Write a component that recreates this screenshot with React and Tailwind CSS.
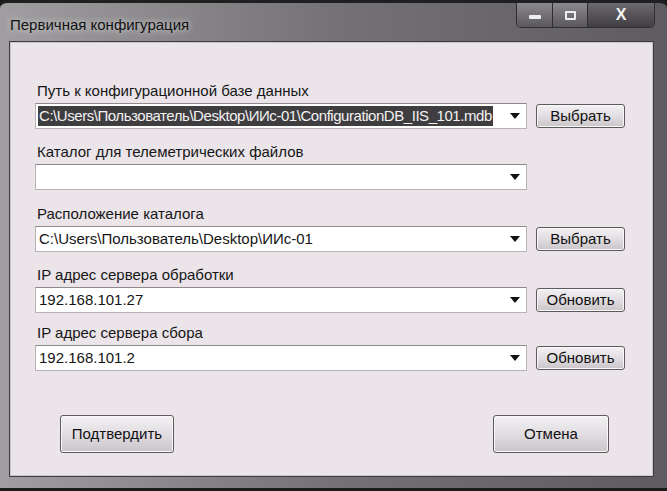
import React from 'react';

const font = { fontFamily: '"Liberation Sans", Arial, sans-serif' };

const Arrow = () => (
  <svg width="10" height="6" viewBox="0 0 10 6" className="shrink-0">
    <path d="M0 0 H10 L5 6 Z" fill="#111" />
  </svg>
);

const Combo = ({ value, selected }) => (
  <div className="w-[492px] h-[26px] bg-white border border-[#b8b2b8] border-t-[#8e8a8e] flex items-center pl-[2px] pr-[6px] gap-[8px]">
    <div className="flex-1 overflow-hidden flex justify-start min-w-0">
      {selected ? (
        <span className="bg-[#3f3d40] text-[#f2f2f2] whitespace-nowrap px-[1px] leading-[20px] text-[15px] tracking-[-0.45px]">{value}</span>
      ) : (
        <span className="whitespace-nowrap text-[15px] text-[#151515] pl-[1px]">{value}</span>
      )}
    </div>
    <Arrow />
  </div>
);

const Btn = ({ children, className = '' }) => (
  <div className={`rounded-[3px] border border-[#5d5a5e] bg-gradient-to-b from-[#f3f1f3] via-[#e1dde1] to-[#c9c5c9] flex items-center justify-center text-[15px] text-[#111] shadow-[inset_0_0_0_1px_#f8f8f8] ${className}`}>
    {children}
  </div>
);

const Row = ({ label, value, selected, button, mt }) => (
  <div className={mt}>
    <div className="h-[20px] leading-[20px] pl-[2px] text-[15px] text-[#161616]">{label}</div>
    <div className="mt-[2px] flex items-center gap-[9px]">
      <Combo value={value} selected={selected} />
      {button && <Btn className="w-[89px] h-[24px]">{button}</Btn>}
    </div>
  </div>
);

export default function App() {
  return (
    <div style={font} className="w-[667px] h-[491px] bg-[#1a1a1a] overflow-hidden">
      <div className="w-[667px] h-[488px] rounded-t-[8px] border-t-[3px] border-[#202020] bg-gradient-to-r from-[#a09ea0] via-[#747276] to-[#5e5c60] flex flex-col">
        {/* Title bar */}
        <div className="h-[39px] flex items-start">
          <div className="pl-[10px] pt-[11px] text-[15px] text-[#111] [text-shadow:0_0_6px_#e8e8e8]">Первичная конфигурация</div>
          <div className="ml-auto mr-[12px] flex h-[25px] rounded-b-[5px] border border-t-0 border-[#2e2e30] overflow-hidden">
            <div className="w-[36px] bg-gradient-to-b from-[#8c8a8e] to-[#5a585c] border-r border-[#2e2e30] flex items-center justify-center">
              <div className="w-[12px] h-[4px] bg-[#eee] rounded-[1px] mt-[4px]" />
            </div>
            <div className="w-[35px] bg-gradient-to-b from-[#8c8a8e] to-[#5a585c] border-r border-[#2e2e30] flex items-center justify-center">
              <div className="w-[11px] h-[9px] border-2 border-[#eee] rounded-[1px]" />
            </div>
            <div className="w-[66px] bg-gradient-to-b from-[#6c6a6e] to-[#403e42] flex items-center justify-center text-[#f4f4f4] text-[16px] font-bold">X</div>
          </div>
        </div>
        {/* Client area */}
        <div className="mx-[10px] w-[643px] h-[434px] bg-[#ebe5ea] border border-[#c9c5c9] shadow-[0_0_0_1px_#3e3c40] pl-[24px] flex flex-col">
          <Row mt="mt-[38px]" label="Путь к конфигурационной базе данных" value="C:\Users\Пользователь\Desktop\ИИс-01\ConfigurationDB_IIS_101.mdb" selected button="Выбрать" />
          <Row mt="mt-[13px]" label="Каталог для телеметрических файлов" value="" />
          <Row mt="mt-[14px]" label="Расположение каталога" value="C:\Users\Пользователь\Desktop\ИИс-01" button="Выбрать" />
          <Row mt="mt-[13px]" label="IP адрес сервера обработки" value="192.168.101.27" button="Обновить" />
          <Row mt="mt-[10px]" label="IP адрес сервера сбора" value="192.168.101.2" button="Обновить" />
          <div className="mt-[44px] flex pl-[25px]">
            <Btn className="w-[114px] h-[38px]">Подтвердить</Btn>
            <Btn className="ml-[319px] w-[116px] h-[38px]">Отмена</Btn>
          </div>
        </div>
      </div>
    </div>
  );
}
